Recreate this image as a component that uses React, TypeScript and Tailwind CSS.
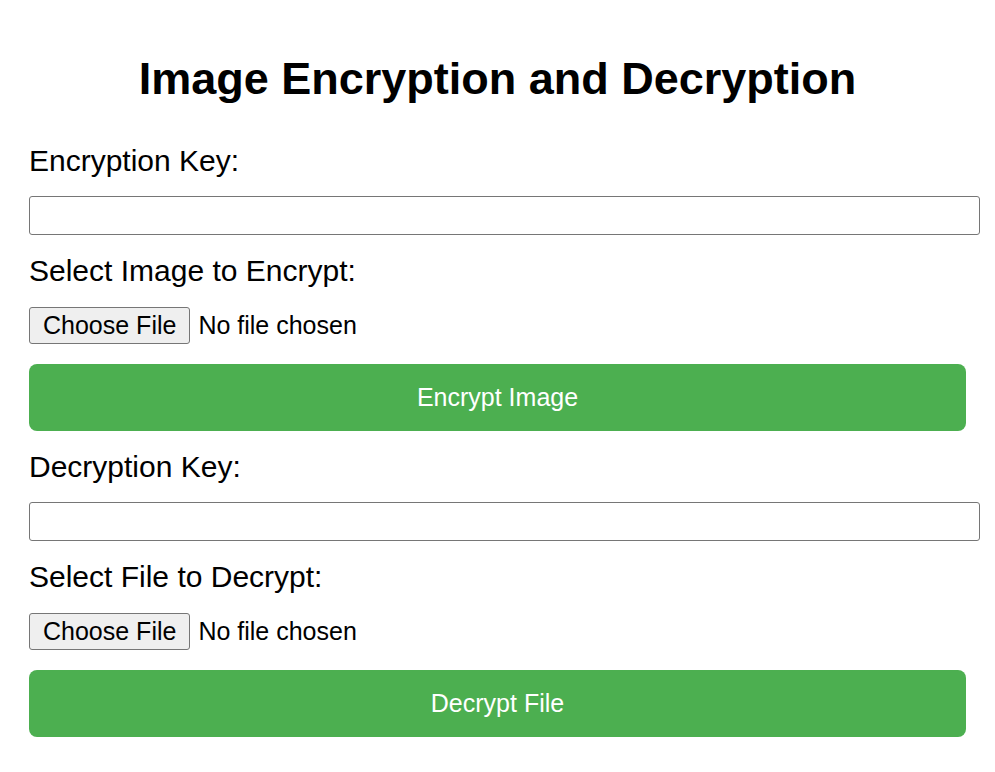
import { useState } from 'react'

function KeyField({ label, value, onChange }: { label: string; value: string; onChange: (v: string) => void }) {
  return (
    <>
      <label className="block text-[30px] leading-[34.5px] pt-[2px] mb-[17.5px]">{label}</label>
      <input
        type="text"
        value={value}
        onChange={(e) => onChange(e.target.value)}
        className="box-content block w-full h-[25px] px-[6px] py-[6px] border border-[#767676] rounded-[3px] text-[20px] mb-[17px] outline-none"
      />
    </>
  )
}

function FilePicker({ label, fileName, onPick }: { label: string; fileName: string | null; onPick: (n: string | null) => void }) {
  return (
    <>
      <div className="text-[30px] leading-[34.5px] pt-[2px] mb-[18.5px]">{label}</div>
      <label className="flex items-center mb-[20px] text-[25px] cursor-pointer">
        <input
          type="file"
          className="hidden"
          onChange={(e) => onPick(e.target.files && e.target.files[0] ? e.target.files[0].name : null)}
        />
        <span className="flex items-center h-[37px] px-[13px] pt-[1px] bg-[#efefef] border border-[#767676] rounded-[3px] leading-none">
          Choose File
        </span>
        <span className="ml-[8px] pt-[1px] leading-none">{fileName || 'No file chosen'}</span>
      </label>
    </>
  )
}

export default function App() {
  const [encKey, setEncKey] = useState('')
  const [decKey, setDecKey] = useState('')
  const [encFile, setEncFile] = useState<string | null>(null)
  const [decFile, setDecFile] = useState<string | null>(null)

  return (
    <div className="min-h-screen bg-white text-black font-['Liberation_Sans',Arial,sans-serif]">
      <div className="px-[29px] pt-[53px] pb-[20px]">
        <h1 className="text-[45px] leading-[51.75px] font-bold text-center mb-[37px]">
          Image Encryption and Decryption
        </h1>

        <KeyField label="Encryption Key:" value={encKey} onChange={setEncKey} />
        <FilePicker label="Select Image to Encrypt:" fileName={encFile} onPick={setEncFile} />
        <button className="block w-full h-[67px] bg-[#4caf50] text-white text-[25px] rounded-[8px] mb-[17px] cursor-pointer">
          Encrypt Image
        </button>

        <KeyField label="Decryption Key:" value={decKey} onChange={setDecKey} />
        <FilePicker label="Select File to Decrypt:" fileName={decFile} onPick={setDecFile} />
        <button className="block w-full h-[67px] bg-[#4caf50] text-white text-[25px] rounded-[8px] cursor-pointer">
          Decrypt File
        </button>
      </div>
    </div>
  )
}
